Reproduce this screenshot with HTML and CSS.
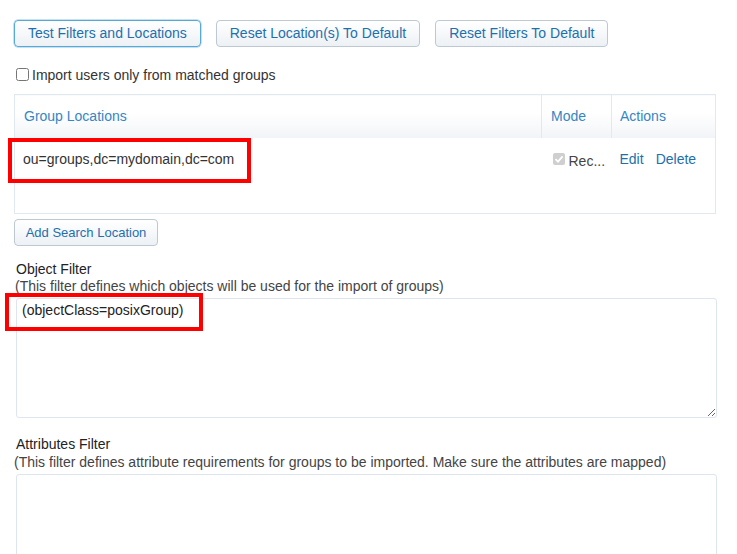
FILE: index.html
```html
<!DOCTYPE html>
<html>
<head>
<meta charset="utf-8">
<link rel="stylesheet" href="styles.css">
</head>
<body>
<div class="page">
  <div class="toolbar">
    <button class="btn btn-focus">Test Filters and Locations</button>
    <button class="btn">Reset Location(s) To Default</button>
    <button class="btn">Reset Filters To Default</button>
  </div>
  <label class="check-row"><input type="checkbox" class="cb"><span>Import users only from matched groups</span></label>
  <div class="grid-wrap">
    <table class="grid">
      <thead>
        <tr>
          <th class="c-loc">Group Locations</th>
          <th class="c-mode">Mode</th>
          <th class="c-act">Actions</th>
        </tr>
      </thead>
      <tbody>
        <tr>
          <td class="c-loc"><span class="anno-wrap">ou=groups,dc=mydomain,dc=com<span class="anno anno-1"></span></span></td>
          <td class="c-mode"><div class="mode"><span class="fake-cb"><svg width="12" height="12" viewBox="0 0 12 12"><path d="M2.5 6.2 L5 8.6 L9.6 3.4" fill="none" stroke="#fff" stroke-width="1.8"/></svg></span><span class="mode-text">Rec...</span></div></td>
          <td class="c-act"><a class="link">Edit</a><a class="link">Delete</a></td>
        </tr>
      </tbody>
    </table>
  </div>
  <button class="btn btn-small">Add Search Location</button>

  <div class="field first">
    <div class="label">Object Filter</div>
    <div class="desc">(This filter defines which objects will be used for the import of groups)</div>
    <div class="ta-wrap">
      <textarea class="ta">(objectClass=posixGroup)</textarea>
      <span class="anno anno-2"></span>
    </div>
  </div>

  <div class="field second">
    <div class="label">Attributes Filter</div>
    <div class="desc">(This filter defines attribute requirements for groups to be imported. Make sure the attributes are mapped)</div>
    <div class="ta-wrap">
      <textarea class="ta tall"></textarea>
    </div>
  </div>
</div>
</body>
</html>
```

FILE: styles.css
```css
html, body {
  margin: 0;
  padding: 0;
  background: #fff;
}
body {
  font-family: "Liberation Sans", Arial, sans-serif;
  font-size: 14px;
  color: #333;
}
.page {
  padding: 20px 22px 0 14px;
}
.toolbar {
  display: flex;
  gap: 15px;
}
.btn {
  font-family: "Liberation Sans", Arial, sans-serif;
  font-size: 14px;
  color: #1e6fae;
  height: 27px;
  padding: 0 13px;
  border: 1px solid #bcc8d2;
  border-radius: 4px;
  background: linear-gradient(#ffffff, #edf1f5);
  line-height: 25px;
  cursor: pointer;
}
.btn-focus {
  border-color: #57a9d8;
  box-shadow: 0 0 0 0.5px #8cc6e6;
}
.btn-small {
  font-size: 13px;
  width: 144px;
  padding: 0;
  margin-top: 5px;
  display: block;
}
.check-row {
  display: flex;
  align-items: center;
  margin-top: 19px;
  height: 17px;
  color: #333;
}
.cb {
  width: 13px;
  height: 13px;
  margin: 0 3px 0 2px;
}
.grid-wrap {
  margin-top: 11px;
  width: 701px;
}
.grid {
  width: 701px;
  border-collapse: collapse;
  table-layout: fixed;
  border: 1px solid #e1e8ee;
}
.grid th, .grid td {
  box-sizing: border-box;
}
.grid th {
  height: 43px;
  text-align: left;
  font-weight: normal;
  color: #3586c3;
  background: linear-gradient(#ffffff 40%, #f1f4f7);
  border-left: 1px solid #e1e8ee;
  padding: 0 9px;
  vertical-align: middle;
}
.grid td {
  height: 76px;
  vertical-align: top;
  padding: 13px 8px 0 8px;
  line-height: 17px;
}
.grid .c-loc { width: 527px; border-left: none; }
.grid .c-mode { width: 70px; }
.grid .c-act { width: 104px; }
th.c-act { padding-left: 8px; }
td.c-loc { color: #333; }
td.c-mode { padding-left: 11px; padding-right: 2px; }
td.c-act { padding-left: 8px; }
.mode {
  display: flex;
  align-items: center;
  white-space: nowrap;
  overflow: hidden;
}
.fake-cb {
  flex: none;
  width: 12px;
  height: 12px;
  border-radius: 2px;
  background: #cfcfcf;
  display: inline-flex;
  margin-right: 4px;
  margin-top: -2px;
}
.mode-text {
  color: #444;
  margin-top: 2px;
}
.link {
  color: #1e6fae;
  margin-right: 12px;
  cursor: pointer;
}
.anno-wrap {
  position: relative;
}
.anno {
  position: absolute;
  border: 4px solid #ff0000;
  pointer-events: none;
}
.anno-1 {
  left: -15px;
  top: -13px;
  width: 235px;
  height: 37px;
}
.field {
  margin-left: 2px;
}
.field.first {
  margin-top: 15px;
}
.field.second {
  margin-top: 18px;
}
.label {
  color: #222;
  line-height: 17px;
}
.desc {
  color: #444;
  line-height: 17px;
  margin-left: -1px;
}
.field.second .desc {
  margin-left: -2px;
  margin-top: 1px;
}
.ta-wrap {
  position: relative;
  margin-top: 3px;
  width: 701px;
}
.field.second .ta-wrap {
  margin-top: 3px;
}
.ta {
  display: block;
  box-sizing: border-box;
  width: 701px;
  height: 120px;
  border: 1px solid #dde5ee;
  border-radius: 3px;
  padding: 3px 5px;
  font-family: "Liberation Sans", Arial, sans-serif;
  font-size: 14px;
  color: #222;
  line-height: 17px;
  resize: vertical;
  outline: none;
}
.ta.tall {
  height: 150px;
}
.anno-2 {
  left: -11px;
  top: -5px;
  width: 190px;
  height: 30px;
}
```
